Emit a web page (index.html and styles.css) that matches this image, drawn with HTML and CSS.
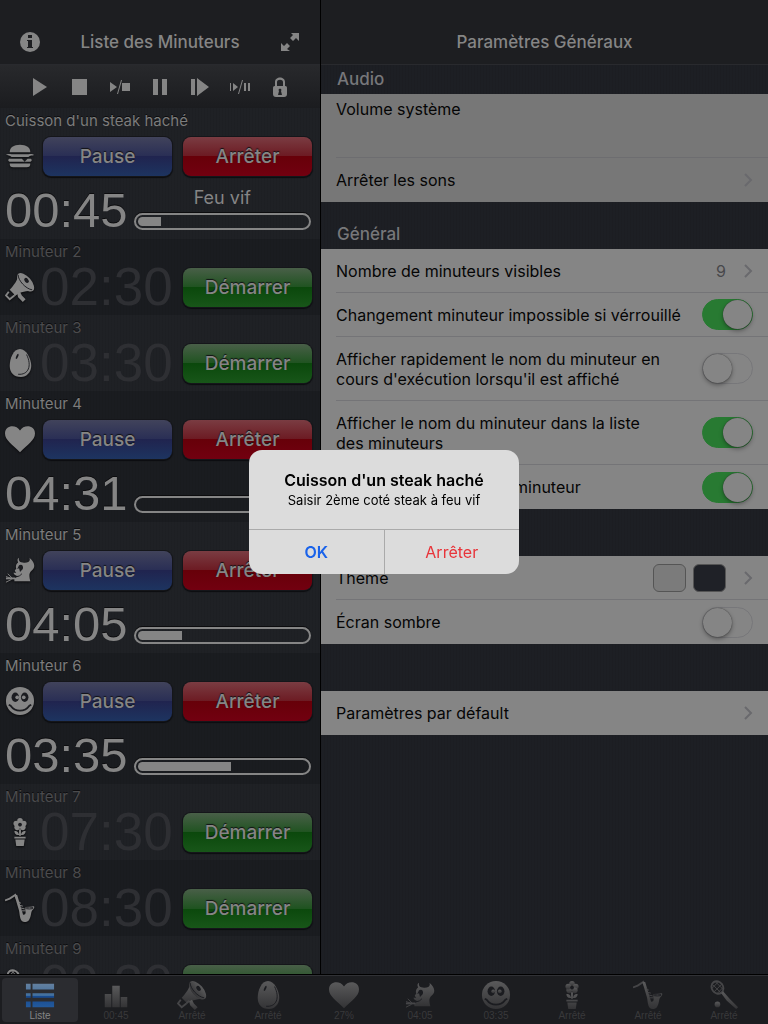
FILE: index.html
```html
<!DOCTYPE html>
<html lang="fr">
<head>
    <meta charset="UTF-8">
    <meta name="viewport" content="width=device-width, initial-scale=1.0">
    <title>Liste des Minuteurs</title>
    <link rel="stylesheet" href="styles.css">
</head>
<body>
    <!-- Icon sprite -->
    <svg class="sprite" aria-hidden="true">
        <defs>
            <linearGradient id="tabFill" x1="0" y1="0" x2="0" y2="1">
                <stop offset="0" stop-color="#5a5a5b"/>
                <stop offset="1" stop-color="#333335"/>
            </linearGradient>
            <linearGradient id="blueFill" x1="0" y1="0" x2="0" y2="1">
                <stop offset="0" stop-color="#64809f"/>
                <stop offset="0.5" stop-color="#42709f"/>
                <stop offset="0.52" stop-color="#164a91"/>
                <stop offset="1" stop-color="#23599b"/>
            </linearGradient>
            <symbol id="burger" viewBox="0 0 32 32">
                <path d="M5 12c0-5 4-8 11-8s11 3 11 8z"/>
                <path d="M1 15c2-2 4-1 6-1h18c2 0 4-1 6 1-2 1-4 0-6 2H7c-2-2-4-1-6-2z"/>
                <path d="M5 19h13l3 3 3-3h3c2 0 2 3 0 3H5c-2 0-2-3 0-3zM5 24h22c0 3-1 4-4 4H9c-3 0-4-1-4-4z"/>
            </symbol>
            <symbol id="megaphone" viewBox="0 0 32 32">
                <path d="M14 2c0 7-5 12-9 17l6 6c6-4 12-5 19-5z"/>
                <ellipse cx="22" cy="11" rx="12" ry="6" transform="rotate(49 22 11)"/>
                <path class="hole-line thin" d="M14 3c0 6 8 15 15 16"/>
                <ellipse class="hole" cx="23" cy="9" rx="3" ry="2" transform="rotate(49 23 9)"/>
                <path class="line" d="M4 21l-3 4 4 4 5-4M10 25l3-3"/>
                <path d="M13 23l3-2 2 4 4 4-3 3-5-5z"/>
            </symbol>
            <symbol id="egg" viewBox="0 0 32 32">
                <path d="M16 1c7 0 12 11 12 18 0 7-5 12-11 12C9 31 5 26 5 19 5 11 9 1 16 1z"/>
                <path class="hole-line thin" d="M23 7c6 12 2 22-9 21"/>
                <ellipse class="hole" cx="13" cy="9" rx="1" ry="3" transform="rotate(25 13 9)"/>
            </symbol>
            <symbol id="heart" viewBox="0 0 32 32">
                <path d="M16 30C8 22 0 17 0 10 0 1 12 0 16 7c4-7 16-6 16 3 0 7-8 12-16 20z"/>
            </symbol>
            <symbol id="devil" viewBox="0 0 32 32">
                <path d="M15 3c-1 3 1 5 4 5 4 1 9-1 7-5 6 5 7 10 2 14-3 3-2 6-1 11H10v-3l5-3c-2 1-5 0-6-3l3 0c-2-2-2-3 0-4-1-3 0-6 2-7-1-2-1-4 1-5z"/>
                <path class="hole" d="M15 11c3-2 5 1 4 4l-3 3-1-4-2 1z"/>
                <path class="hole-line thin" d="M12 23c3 0 4-1 6-3"/>
                <path class="line" d="M11 25L1 25"/>
                <path class="line thin" d="M3 20l5 5M1 29l6-3M1 23l6 2"/>
            </symbol>
            <symbol id="smiley" viewBox="0 0 32 32">
                <circle cx="16" cy="16" r="15"/>
                <ellipse class="hole" cx="11" cy="12" rx="4" ry="5"/>
                <ellipse class="hole" cx="21" cy="12" rx="4" ry="5"/>
                <circle cx="13" cy="12" r="2"/>
                <circle cx="20" cy="12" r="2"/>
                <path class="hole-line" d="M4 20l2 1c5 7 15 7 20 0l2-1"/>
            </symbol>
            <symbol id="flower" viewBox="0 0 32 32">
                <circle cx="16" cy="4" r="3"/><circle cx="20" cy="7" r="3"/><circle cx="19" cy="11" r="3"/>
                <circle cx="13" cy="11" r="3"/><circle cx="12" cy="7" r="3"/>
                <circle class="hole" cx="16" cy="8" r="2"/>
                <path d="M15 13h2v7h-2zM15 19c-1-4-3-4-5-4 0 3 2 5 5 4zM17 19c1-4 3-4 5-4 0 3-2 5-5 4zM10 21h12v2H10zM11 24h10l-1 7h-8z"/>
            </symbol>
            <symbol id="sax" viewBox="0 0 32 32">
                <path class="line" d="M0 8l5-2 6-4 2 5"/>
                <path d="M10 2l3 0 6 20c0 2 3 1 3-1 0-3-1-4 0-6l9-1c1 3-2 3-3 7-1 7-3 10-7 10-5 0-5-6-6-12z"/>
                <path class="line thin" d="M14 9l3 2M15 13l4 1M17 16l4 1M18 19l4 0"/>
                <ellipse class="hole-line thin" cx="26" cy="16" rx="4" ry="1"/>
            </symbol>
            <symbol id="racket" viewBox="0 0 32 32">
                <ellipse class="line" cx="9" cy="8" rx="6" ry="7" transform="rotate(-35 9 8)"/>
                <path class="line thin" d="M4 5l9 9M7 2l8 8M3 9l7-7M5 13l9-9M9 14l6-6"/>
                <path d="M13 14l2-2 7 8 9 9-2 2-10-9z"/>
                <circle cx="9" cy="26" r="3"/>
            </symbol>
            <symbol id="bars" viewBox="0 0 32 32">
                <path d="M4 15h7v14H4zM12 6h8v23h-8zM21 18h7v11h-7z"/>
            </symbol>
            <symbol id="list" viewBox="0 0 32 32">
                <path d="M1 4h5v6H1zM8 4h23v6H8zM1 14h5v5H1zM8 14h23v5H8zM1 23h5v6H1zM8 23h23v6H8z"/>
            </symbol>
            <symbol id="chevron" viewBox="0 0 10 16">
                <path class="line" d="M2 2l6 6-6 6"/>
            </symbol>
        </defs>
    </svg>

    <div class="app">
        <section class="sidebar">
            <header class="navbar">
                <button class="icon-btn" aria-label="Informations">
                    <svg viewBox="0 0 20 20"><circle cx="10" cy="10" r="10"/><path class="cut" d="M8 3h4v3H8zM7 8h5v7h1v1H7v-1h1V9H7z"/></svg>
                </button>
                <h1>Liste des Minuteurs</h1>
                <button class="icon-btn" aria-label="Agrandir">
                    <svg viewBox="0 0 20 20"><path d="M11 1h8v8l-3-3-3 3-3-3 3-3zM1 11l3 3 3-3 3 3-3 3 3 2H1z"/></svg>
                </button>
            </header>
            <div class="toolbar">
                <button aria-label="Démarrer tout"><svg viewBox="0 0 24 20"><path d="M5 1l14 9-14 9z"/></svg></button>
                <button aria-label="Arrêter tout"><svg viewBox="0 0 24 20"><path d="M4 2h15v16H4z"/></svg></button>
                <button aria-label="Démarrer ou arrêter"><svg viewBox="0 0 24 20"><path d="M2 5l7 5-7 5zM9 17l4-14h1l-4 14zM14 6h8v8h-8z"/></svg></button>
                <button aria-label="Pause tout"><svg viewBox="0 0 24 20"><path d="M5 2h5v16H5zM14 2h5v16h-5z"/></svg></button>
                <button aria-label="Reprendre tout"><svg viewBox="0 0 24 20"><path d="M3 2h4v16H3zM9 1l12 9-12 9z"/></svg></button>
                <button aria-label="Reprendre ou pause"><svg viewBox="0 0 24 20"><path d="M2 6h1v8H2zM5 6l5 4-5 4zM10 17l4-14h1l-4 14zM16 6h2v8h-2zM20 6h2v8h-2z"/></svg></button>
                <button aria-label="Verrouiller"><svg viewBox="0 0 24 20"><path fill-rule="evenodd" d="M7 9V5c0-6 10-6 10 0v4c2 0 2 1 2 3v5c0 2-1 3-3 3H8c-2 0-3-1-3-3v-5c0-2 0-3 2-3zM9 9h6V5c0-3-6-3-6 0zM11 14l-1 4h4l-1-4c2-3-4-3-2 0z"/></svg></button>
            </div>

            <ul class="timers">
                <li class="timer running">
                    <h2>Cuisson d'un steak haché</h2>
                    <div class="timer-main">
                        <svg class="timer-icon"><use href="#burger"/></svg>
                        <button class="btn blue">Pause</button>
                        <button class="btn red">Arrêter</button>
                    </div>
                    <div class="timer-progress">
                        <span class="time">00:45</span>
                        <div class="progress-col">
                            <span class="step">Feu vif</span>
                            <div class="progress"><div class="bar" style="width: 14%"></div></div>
                        </div>
                    </div>
                </li>
                <li class="timer">
                    <h2>Minuteur 2</h2>
                    <div class="timer-main">
                        <svg class="timer-icon"><use href="#megaphone"/></svg>
                        <span class="time">02:30</span>
                        <button class="btn green">Démarrer</button>
                    </div>
                </li>
                <li class="timer">
                    <h2>Minuteur 3</h2>
                    <div class="timer-main">
                        <svg class="timer-icon"><use href="#egg"/></svg>
                        <span class="time">03:30</span>
                        <button class="btn green">Démarrer</button>
                    </div>
                </li>
                <li class="timer running">
                    <h2>Minuteur 4</h2>
                    <div class="timer-main">
                        <svg class="timer-icon"><use href="#heart"/></svg>
                        <button class="btn blue">Pause</button>
                        <button class="btn red">Arrêter</button>
                    </div>
                    <div class="timer-progress">
                        <span class="time">04:31</span>
                        <div class="progress-col">
                            <div class="progress"><div class="bar" style="width: 0%"></div></div>
                        </div>
                    </div>
                </li>
                <li class="timer running">
                    <h2>Minuteur 5</h2>
                    <div class="timer-main">
                        <svg class="timer-icon"><use href="#devil"/></svg>
                        <button class="btn blue">Pause</button>
                        <button class="btn red">Arrêter</button>
                    </div>
                    <div class="timer-progress">
                        <span class="time">04:05</span>
                        <div class="progress-col">
                            <div class="progress"><div class="bar" style="width: 26%"></div></div>
                        </div>
                    </div>
                </li>
                <li class="timer running">
                    <h2>Minuteur 6</h2>
                    <div class="timer-main">
                        <svg class="timer-icon"><use href="#smiley"/></svg>
                        <button class="btn blue">Pause</button>
                        <button class="btn red">Arrêter</button>
                    </div>
                    <div class="timer-progress">
                        <span class="time">03:35</span>
                        <div class="progress-col">
                            <div class="progress"><div class="bar" style="width: 55%"></div></div>
                        </div>
                    </div>
                </li>
                <li class="timer">
                    <h2>Minuteur 7</h2>
                    <div class="timer-main">
                        <svg class="timer-icon"><use href="#flower"/></svg>
                        <span class="time">07:30</span>
                        <button class="btn green">Démarrer</button>
                    </div>
                </li>
                <li class="timer">
                    <h2>Minuteur 8</h2>
                    <div class="timer-main">
                        <svg class="timer-icon"><use href="#sax"/></svg>
                        <span class="time">08:30</span>
                        <button class="btn green">Démarrer</button>
                    </div>
                </li>
                <li class="timer">
                    <h2>Minuteur 9</h2>
                    <div class="timer-main">
                        <svg class="timer-icon"><use href="#racket"/></svg>
                        <span class="time">09:30</span>
                        <button class="btn green">Démarrer</button>
                    </div>
                </li>
            </ul>
        </section>

        <main class="settings">
            <header class="navbar">
                <h1>Paramètres Généraux</h1>
            </header>

            <h2 class="first">Audio</h2>
            <div class="group audio">
                <div class="row volume"><span>Volume système</span></div>
                <a class="row" href="#sons"><span>Arrêter les sons</span><svg class="chevron"><use href="#chevron"/></svg></a>
            </div>

            <h2>Général</h2>
            <div class="group">
                <a class="row" href="#nombre"><span>Nombre de minuteurs visibles</span><span class="value">9</span><svg class="chevron"><use href="#chevron"/></svg></a>
                <label class="row"><span>Changement minuteur impossible si vérrouillé</span><input type="checkbox" class="switch" checked></label>
                <label class="row tall"><span>Afficher rapidement le nom du minuteur en cours d'exécution lorsqu'il est affiché</span><input type="checkbox" class="switch"></label>
                <label class="row tall"><span>Afficher le nom du minuteur dans la liste des minuteurs</span><input type="checkbox" class="switch" checked></label>
                <label class="row"><span>Afficher l'icône dans le minuteur</span><input type="checkbox" class="switch" checked></label>
            </div>

            <h2>Écran</h2>
            <div class="group">
                <a class="row" href="#theme"><span>Thème</span><i class="swatch light"></i><i class="swatch dark"></i><svg class="chevron"><use href="#chevron"/></svg></a>
                <label class="row"><span>Écran sombre</span><input type="checkbox" class="switch"></label>
            </div>

            <div class="group separate">
                <a class="row" href="#defaut"><span>Paramètres par défault</span><svg class="chevron"><use href="#chevron"/></svg></a>
            </div>
        </main>
    </div>

    <nav class="tabbar">
        <a class="tab active" href="#liste"><svg><use href="#list"/></svg>Liste</a>
        <a class="tab" href="#t1"><svg><use href="#bars"/></svg>00:45</a>
        <a class="tab" href="#t2"><svg><use href="#megaphone"/></svg>Arrêté</a>
        <a class="tab" href="#t3"><svg><use href="#egg"/></svg>Arrêté</a>
        <a class="tab" href="#t4"><svg><use href="#heart"/></svg>27%</a>
        <a class="tab" href="#t5"><svg><use href="#devil"/></svg>04:05</a>
        <a class="tab" href="#t6"><svg><use href="#smiley"/></svg>03:35</a>
        <a class="tab" href="#t7"><svg><use href="#flower"/></svg>Arrêté</a>
        <a class="tab" href="#t8"><svg><use href="#sax"/></svg>Arrêté</a>
        <a class="tab" href="#t9"><svg><use href="#racket"/></svg>Arrêté</a>
    </nav>

    <div class="overlay">
        <div class="alert" role="alertdialog" aria-labelledby="alertTitle" aria-describedby="alertText">
            <div class="alert-body">
                <h2 id="alertTitle">Cuisson d'un steak haché</h2>
                <p id="alertText">Saisir 2ème coté steak à feu vif</p>
            </div>
            <div class="alert-buttons">
                <button class="ok">OK</button>
                <button class="stop">Arrêter</button>
            </div>
        </div>
    </div>
</body>
</html>
```
FILE: styles.css
```css
* {
    margin: 0;
    padding: 0;
    box-sizing: border-box;
}

body {
    height: 100vh;
    display: flex;
    flex-direction: column;
    overflow: hidden;
    font-family: Inter, "Liberation Sans", sans-serif;
    font-size: 16px;
    background-color: #1d1f23;
    color: #858585;
    --hole: #1b1c20;
}

button {
    font-family: inherit;
    border: none;
    background: none;
    color: inherit;
    cursor: pointer;
}

a {
    color: inherit;
    text-decoration: none;
}

ul {
    list-style: none;
}

.sprite {
    position: absolute;
    width: 0;
    height: 0;
}

.hole {
    fill: var(--hole);
}

.hole-line {
    fill: none;
    stroke: var(--hole);
    stroke-width: 2;
}

.line {
    fill: none;
    stroke: currentColor;
    stroke-width: 2;
}

.thin {
    stroke-width: 1;
}

.app {
    flex: 1;
    min-height: 0;
    display: grid;
    grid-template-columns: 320px 1fr;
}

.sidebar {
    display: flex;
    flex-direction: column;
    min-height: 0;
    overflow: hidden;
}

.navbar {
    height: 65px;
    padding: 20px 20px 0;
    display: flex;
    align-items: center;
    justify-content: space-between;
    background: #1d1e21;
    border-bottom: 1px solid #292a2e;
}

.navbar h1 {
    font-size: 17px;
    font-weight: 500;
    color: #858585;
}

.icon-btn {
    width: 20px;
    height: 20px;
}

.icon-btn svg {
    width: 20px;
    height: 20px;
    fill: #858585;
}

.icon-btn .cut {
    fill: #1d1e21;
}

.toolbar {
    height: 43px;
    padding: 0 20px;
    display: flex;
    justify-content: space-between;
    align-items: center;
    background: linear-gradient(#28292c, #1b1c1f);
}

.toolbar button {
    width: 40px;
    height: 40px;
    display: flex;
    align-items: center;
    justify-content: center;
}

.toolbar svg {
    width: 24px;
    height: 20px;
    fill: #858585;
}

/* Timer list */
.timers {
    flex: 1;
    min-height: 0;
    overflow: hidden;
}

.timer {
    height: 76px;
    padding: 4px 8px 0 5px;
    background: repeating-linear-gradient(90deg, rgba(0,0,0,0.05) 0 1px, transparent 1px 3px), #1a1c20;
}

.timer:nth-child(odd) {
    background-color: #1f2125;
}

.timer.running {
    height: 131px;
}

.timer h2 {
    height: 24px;
    line-height: 18px;
    font-size: 15px;
    font-weight: 400;
    color: #4b4b4d;
    text-shadow: 0 -1px 0 #0c0c0e;
}

.timer.running h2 {
    color: #7c7c7c;
}

.timer-main {
    height: 40px;
    display: flex;
    align-items: center;
}

.timer-icon {
    width: 30px;
    height: 30px;
    margin-right: 5px;
    flex: none;
    fill: #858585;
    color: #858585;
    filter: drop-shadow(0 1px 1px #0a0a0c);
}

.btn {
    width: 129px;
    height: 39px;
    margin-left: auto;
    border-radius: 8px;
    font-size: 19px;
    font-weight: 500;
    color: #858585;
    text-shadow: 0 -1px 1px #101014;
    box-shadow: 0 0 0 1px #15161a, 0 1px 1px 1px #0c0d10;
}

.timer-main .blue {
    margin-left: 3px;
}

.blue {
    background: linear-gradient(#41435b 0%, #292e55 50%, #20244f 50%, #1d3460 100%);
}

.red {
    background: linear-gradient(#7a3c42 0%, #6c1a22 50%, #670009 50%, #720010 100%);
}

.green {
    background: linear-gradient(#495f48 0%, #1f5320 50%, #0b480c 50%, #185619 100%);
}

.time {
    font-family: "Liberation Sans", Arial, sans-serif;
    font-size: 53px;
    line-height: 40px;
    color: #2e2f33;
}

.timer.running .time {
    font-size: 49px;
    color: #858585;
    text-shadow: 0 -1px 0 #0c0c0e;
}

.timer-progress {
    display: flex;
    gap: 6px;
    padding: 14px 1px 0 0;
}

.progress-col {
    flex: 1;
    height: 40px;
    display: flex;
    flex-direction: column;
    justify-content: flex-end;
    align-items: center;
}

.step {
    font-size: 18px;
    line-height: 22px;
    margin-bottom: 4px;
}

.progress {
    width: 100%;
    height: 17px;
    padding: 2px;
    flex: none;
    border: 2px solid #858585;
    border-radius: 9px;
    overflow: hidden;
    box-shadow: 0 -1px 0 #0c0c0e;
}

.bar {
    height: 100%;
    border-radius: 5px 0 0 5px;
    background: #858585;
}

/* Settings */
.settings {
    border-left: 1px solid #000;
    background: repeating-linear-gradient(90deg, rgba(0,0,0,0.05) 0 1px, transparent 1px 3px), #1d1f24;
    overflow: hidden;
}

.settings .navbar {
    justify-content: center;
}

.settings h2 {
    height: 47px;
    padding: 20px 16px 0;
    line-height: 24px;
    font-size: 17px;
    font-weight: 500;
    color: #77777a;
}

.settings .first {
    height: 29px;
    padding-top: 2px;
}

.group {
    background: #858585;
    color: #050505;
}

.group.audio {
    background: #777;
}

.separate {
    margin-top: 47px;
}

.row {
    min-height: 44px;
    margin-left: 15px;
    padding-right: 15px;
    display: flex;
    align-items: center;
    line-height: 20px;
    border-bottom: 1px solid #747477;
}

.row:last-child {
    border-bottom: none;
}

.row span:first-child {
    flex: 1;
}

.row.tall {
    min-height: 64px;
}

.row.tall span {
    padding-right: 36px;
}

.row.volume {
    min-height: 64px;
    padding-top: 5px;
    align-items: flex-start;
    border-color: #6d6d70;
}

.value {
    color: #48484b;
    margin-right: 17px;
}

.chevron {
    width: 10px;
    height: 16px;
    color: #69696d;
}

.swatch {
    width: 33px;
    height: 28px;
    margin-right: 7px;
    border: 1px solid #555;
    border-radius: 6px;
}

.swatch.light {
    background: #7b7b7b;
}

.swatch.dark {
    background: #1f2127;
    margin-right: 17px;
}

.switch {
    appearance: none;
    flex: none;
    width: 51px;
    height: 31px;
    border: 1px solid #77777a;
    border-radius: 16px;
    cursor: pointer;
}

.switch::before {
    content: "";
    display: block;
    width: 29px;
    height: 29px;
    border-radius: 50%;
    background: #858585;
    box-shadow: 0 2px 4px rgba(0,0,0,0.35), 0 0 1px #333;
}

.switch:checked {
    background: #287a32;
    border-color: #287a32;
}

.switch:checked::before {
    margin-left: 20px;
}

/* Tab bar */
.tabbar {
    height: 49px;
    padding: 2px 6px 2px 2px;
    display: grid;
    grid-template-columns: repeat(10, 1fr);
    background: #1c1d20;
    border-top: 1px solid #303135;
    box-shadow: 0 -1px 0 #000;
    position: relative;
}

.tab {
    display: flex;
    flex-direction: column;
    align-items: center;
    justify-content: center;
    border-radius: 4px;
    font-family: "Liberation Sans", Arial, sans-serif;
    font-size: 10px;
    line-height: 11px;
    color: #39393b;
}

.tab svg {
    width: 30px;
    height: 30px;
    fill: url(#tabFill);
    color: #454547;
}

.tab.active {
    background: #2b2c30;
    color: #858585;
}

.tab.active svg {
    fill: url(#blueFill);
}

/* Alert */
.overlay {
    position: fixed;
    inset: 0;
    display: flex;
    align-items: center;
    justify-content: center;
}

.alert {
    width: 270px;
    border-radius: 13px;
    overflow: hidden;
    background: #dcdcdc;
    color: #000;
    text-align: center;
}

.alert-body {
    padding: 20px 16px 19px;
}

.alert h2 {
    font-size: 16px;
    line-height: 20px;
    font-weight: 600;
}

.alert p {
    font-size: 13px;
    line-height: 20px;
}

.alert-buttons {
    display: flex;
    border-top: 1px solid #aaa;
}

.alert-buttons button {
    flex: 1;
    height: 44px;
    font-size: 16px;
}

.alert-buttons .ok {
    font-weight: 600;
    color: #1a63ea;
    border-right: 1px solid #aaa;
}

.alert-buttons .stop {
    color: #e8343a;
}
```
